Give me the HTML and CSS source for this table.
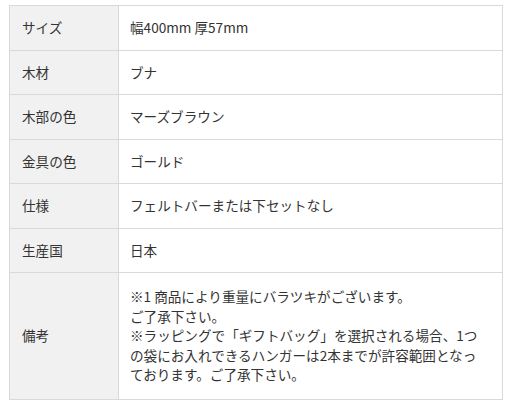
FILE: index.html
```html
<!DOCTYPE html>
<html lang="ja">
<head>
<meta charset="utf-8">
<link rel="stylesheet" href="styles.css">
</head>
<body>
<table class="spec">
  <tr><th>サイズ</th><td>幅400mm 厚57mm</td></tr>
  <tr><th>木材</th><td>ブナ</td></tr>
  <tr><th>木部の色</th><td>マーズブラウン</td></tr>
  <tr><th>金具の色</th><td>ゴールド</td></tr>
  <tr><th>仕様</th><td>フェルトバーまたは下セットなし</td></tr>
  <tr><th>生産国</th><td>日本</td></tr>
  <tr><th>備考</th><td class="note">※1 商品により重量にバラツキがございます。<br>ご了承下さい。<br>※ラッピングで「ギフトバッグ」を選択される場合、1つの袋にお入れできるハンガーは2本までが許容範囲となっております。ご了承下さい。</td></tr>
</table>
</body>
</html>
```
FILE: styles.css
```css
html, body {
  margin: 0;
  padding: 0;
  background: #ffffff;
}
body {
  font-family: "Noto Sans CJK JP", "Noto Sans", sans-serif;
  font-size: 13.6px;
  color: #333333;
}
.spec {
  margin: 5px 0 0 9px;
  width: 494px;
  border-collapse: collapse;
}
.spec th, .spec td {
  border: 1px solid #d9d9d9;
  padding: 12px 14px 12px 12px;
  line-height: 19.5px;
  text-align: left;
  vertical-align: middle;
  font-weight: normal;
}
.spec th {
  width: 82px;
  background: #f1f1f1;
}
.spec td {
  padding-left: 11px;
}
.spec td.note {
  padding-top: 14px;
  padding-bottom: 14px;
}
```
